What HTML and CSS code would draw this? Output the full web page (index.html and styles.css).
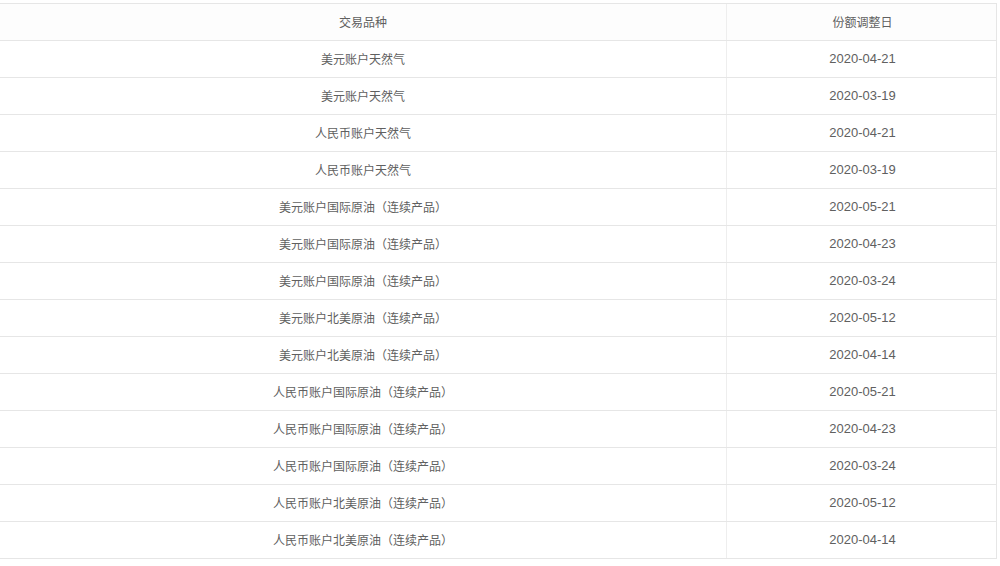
FILE: index.html
```html
<!DOCTYPE html>
<html lang="zh-CN">
<head>
<meta charset="utf-8">
<title>份额调整日</title>
<link rel="stylesheet" href="styles.css">
</head>
<body>
<div class="wrap">
<table class="grid">
<thead>
<tr><th class="name">交易品种</th><th class="date">份额调整日</th></tr>
</thead>
<tbody>
<tr><td class="name">美元账户天然气</td><td class="date">2020-04-21</td></tr>
<tr><td class="name">美元账户天然气</td><td class="date">2020-03-19</td></tr>
<tr><td class="name">人民币账户天然气</td><td class="date">2020-04-21</td></tr>
<tr><td class="name">人民币账户天然气</td><td class="date">2020-03-19</td></tr>
<tr><td class="name">美元账户国际原油（连续产品）</td><td class="date">2020-05-21</td></tr>
<tr><td class="name">美元账户国际原油（连续产品）</td><td class="date">2020-04-23</td></tr>
<tr><td class="name">美元账户国际原油（连续产品）</td><td class="date">2020-03-24</td></tr>
<tr><td class="name">美元账户北美原油（连续产品）</td><td class="date">2020-05-12</td></tr>
<tr><td class="name">美元账户北美原油（连续产品）</td><td class="date">2020-04-14</td></tr>
<tr><td class="name">人民币账户国际原油（连续产品）</td><td class="date">2020-05-21</td></tr>
<tr><td class="name">人民币账户国际原油（连续产品）</td><td class="date">2020-04-23</td></tr>
<tr><td class="name">人民币账户国际原油（连续产品）</td><td class="date">2020-03-24</td></tr>
<tr><td class="name">人民币账户北美原油（连续产品）</td><td class="date">2020-05-12</td></tr>
<tr><td class="name">人民币账户北美原油（连续产品）</td><td class="date">2020-04-14</td></tr>
</tbody>
</table>
</div>
</body>
</html>
```
FILE: styles.css
```css
html, body {
  margin: 0;
  padding: 0;
  background: #ffffff;
}
.wrap {
  padding-top: 3px;
  width: 997px;
}
.grid {
  border-collapse: collapse;
  table-layout: fixed;
  width: 997px;
  font-family: "Noto Sans CJK SC", "Noto Sans", sans-serif;
  font-size: 12px;
  color: #606060;
}
.grid th, .grid td {
  height: 35px;
  padding: 0 0 1px 0;
  text-align: center;
  vertical-align: middle;
  font-weight: normal;
  border-top: 1px solid #e6e6e6;
  border-bottom: 1px solid #e6e6e6;
  line-height: 16px;
}
.grid .name {
  width: 726px;
}
.grid .date {
  border-left: 1px solid #eeeeee;
  border-right: 1px solid #e6e6e6;
  padding-left: 2px;
}
.grid td.date {
  font-family: "Liberation Sans", "Noto Sans CJK SC", sans-serif;
  font-size: 13px;
}
.grid thead th {
  background: #fdfdfd;
}
```
